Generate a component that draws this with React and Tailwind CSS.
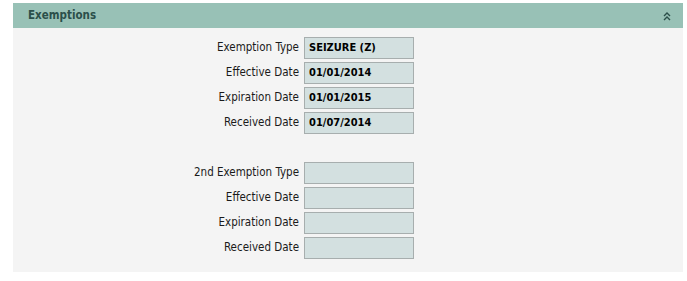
import React from 'react';

const first = [
  { label: 'Exemption Type', value: 'SEIZURE (Z)' },
  { label: 'Effective Date', value: '01/01/2014' },
  { label: 'Expiration Date', value: '01/01/2015' },
  { label: 'Received Date', value: '01/07/2014' },
];

const second = [
  { label: '2nd Exemption Type', value: '' },
  { label: 'Effective Date', value: '' },
  { label: 'Expiration Date', value: '' },
  { label: 'Received Date', value: '' },
];

function Row({ label, value }) {
  return (
    <div className="flex items-center h-[22px]">
      <div className="w-[291px] pr-[5px] text-right text-[11.5px] text-[#1a1a1a]">{label}</div>
      <div className="w-[110px] h-[22px] bg-[#d3e0e0] border border-[#a7aeae] flex items-center px-[4px] text-[11px] font-bold text-black">
        {value}
      </div>
    </div>
  );
}

export default function App() {
  return (
    <div className="bg-white w-[687px] h-[281px] pl-[13px] pt-[3px]" style={{ fontFamily: '"DejaVu Sans Condensed", "DejaVu Sans", Tahoma, sans-serif' }}>
      <div className="w-[670px]">
        {/* Header */}
        <div className="h-[25px] bg-[#98c1b6] flex items-center justify-between pl-[15px] pr-[12px]">
          <span className="text-[11.5px] font-bold text-[#2b4f4a]">Exemptions</span>
          <svg width="8" height="9" viewBox="0 0 8 9" className="mt-[1px]">
            <path d="M1 4 L4 1 L7 4" fill="none" stroke="#2b4f4a" strokeWidth="1.4" />
            <path d="M1 8 L4 5 L7 8" fill="none" stroke="#2b4f4a" strokeWidth="1.4" />
          </svg>
        </div>

        {/* Body */}
        <div className="bg-[#f4f4f4] pt-[9px] pb-[13px] flex flex-col gap-[3px]">
          {first.map((r) => (
            <Row key={'a' + r.label} {...r} />
          ))}
          <div className="h-[22px]" />
          {second.map((r) => (
            <Row key={'b' + r.label} {...r} />
          ))}
        </div>
      </div>
    </div>
  );
}
